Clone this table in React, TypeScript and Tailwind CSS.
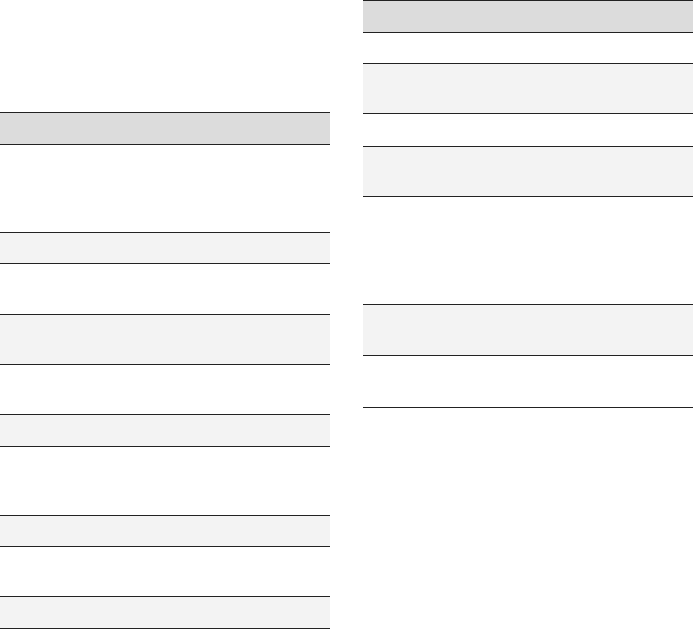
type Row = { h: string; shade: boolean };

const leftRows: Row[] = [
  { h: 'h-[88px]', shade: false },
  { h: 'h-[31px]', shade: true },
  { h: 'h-[51px]', shade: false },
  { h: 'h-[50px]', shade: true },
  { h: 'h-[50px]', shade: false },
  { h: 'h-[32px]', shade: true },
  { h: 'h-[69px]', shade: false },
  { h: 'h-[31px]', shade: true },
  { h: 'h-[50px]', shade: false },
  { h: 'h-[32px]', shade: true },
];

const rightRows: Row[] = [
  { h: 'h-[31px]', shade: false },
  { h: 'h-[50px]', shade: true },
  { h: 'h-[33px]', shade: false },
  { h: 'h-[50px]', shade: true },
  { h: 'h-[108px]', shade: false },
  { h: 'h-[51px]', shade: true },
  { h: 'h-[52px]', shade: false },
];

const DataTable = ({ rows }: { rows: Row[] }) => (
  <div className="border-t border-[#222222]">
    <div className="h-[32px] bg-[#dcdcdc] border-b border-[#222222]"></div>
    {rows.map((row, i) => (
      <div
        key={i}
        className={`${row.h} border-b border-[#222222] ${
          row.shade ? 'bg-[#f3f3f3]' : 'bg-white'
        }`}
      ></div>
    ))}
  </div>
);

export default function App() {
  return (
    <div
      className="w-[693px] h-[629px] overflow-hidden bg-white grid grid-cols-2 gap-[33px] items-start"
      style={{ fontFamily: '"Liberation Sans", Arial, sans-serif' }}
    >
      <div className="pt-[112px]">
        <DataTable rows={leftRows} />
      </div>
      <div>
        <DataTable rows={rightRows} />
      </div>
    </div>
  );
}
